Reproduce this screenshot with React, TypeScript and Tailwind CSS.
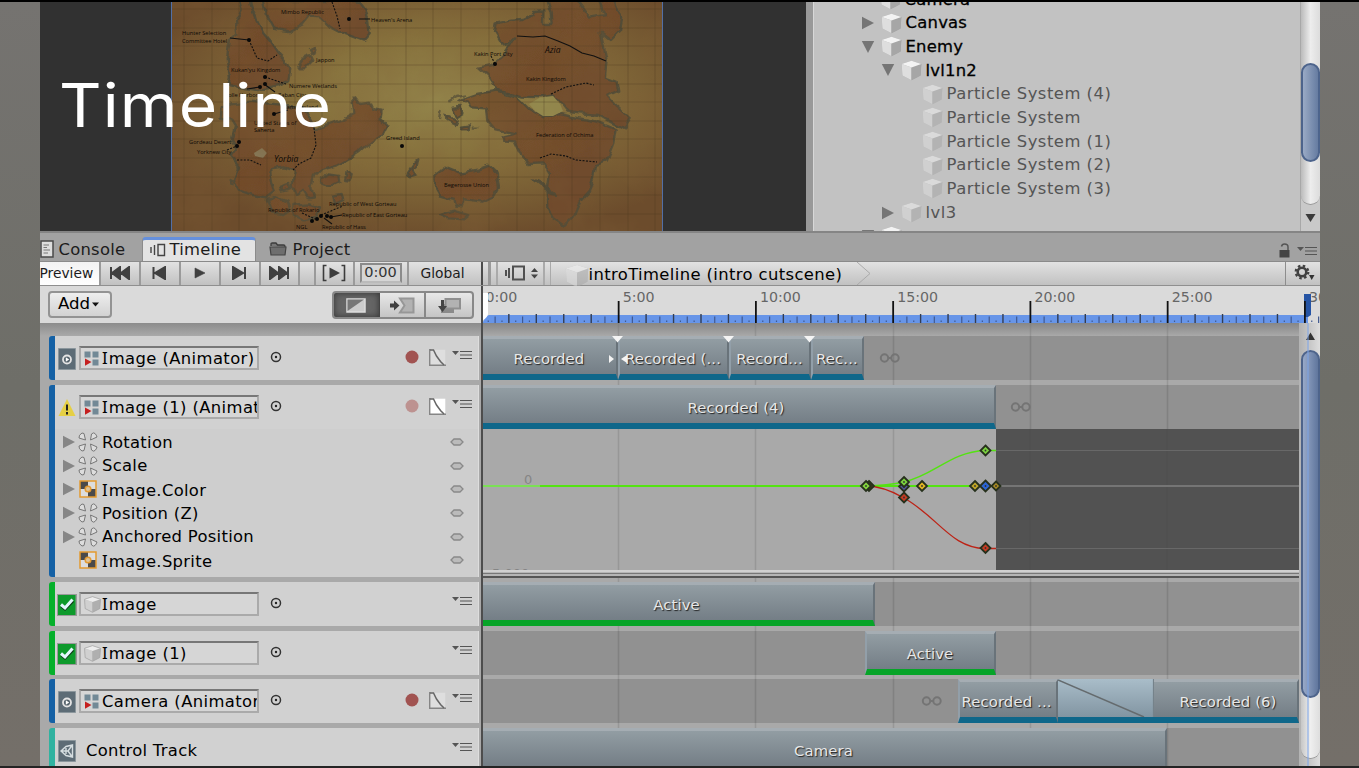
import React from "react";

const UI = "font-['DejaVu_Sans',sans-serif]";

/* Text whose capital I carries serifs. */
function T({ children }: { children: string }) {
  const parts = children.split("I");
  return (
    <>
      {parts.map((p, i) => (
        <React.Fragment key={i}>
          {i > 0 && <span className="font-['Noto_Sans',sans-serif] text-[1.02em] tracking-[0.06em]">I</span>}
          {p}
        </React.Fragment>
      ))}
    </>
  );
}

function Cube({ dim = false, soft = false, size = 21 }: { dim?: boolean; soft?: boolean; size?: number }) {
  return (
    <svg width={size} height={size} viewBox="0 0 21 21" className={dim ? "shrink-0 opacity-50" : soft ? "shrink-0 opacity-80" : "shrink-0"}>
      <path d="M10.5 .8 20.3 4 19.6 15.5 10.5 20.2 1.4 15.5.7 4Z" fill="#a4a4a4" />
      <path d="M.7 4 10.5 7.4V20.2L1.4 15.5Z" fill={soft ? "#cfcfcf" : "#dedede"} />
      <path d="M20.3 4 10.5 7.4V20.2l9.1-4.7Z" fill="#a6a6a6" />
      <path d="M10.5.8 20.3 4 10.5 7.4.7 4Z" fill="#f3f3f3" />
      {soft && <path d="M10.5 .8 20.3 4 19.6 15.5 10.5 20.2 1.4 15.5.7 4Z" fill="none" stroke="#999" strokeWidth=".9" />}
    </svg>
  );
}

function Fold({ open = false }: { open?: boolean }) {
  return (
    <svg width="14" height="14" viewBox="0 0 14 14" className="shrink-0">
      <path d={open ? "M.8 1H13.2L7 13Z" : "M1 .8V13.2L13 7Z"} fill="#757575" />
    </svg>
  );
}

function MapPicture() {
  const label = "font-['Open_Sans',sans-serif]";
  return (
    <svg width="490" height="229" viewBox="172 2 490 229" className="block shrink-0">
      <defs>
        <radialGradient id="sea" cx=".54" cy=".42" r=".62">
          <stop offset="0" stopColor="#94874c" />
          <stop offset=".45" stopColor="#86703c" />
          <stop offset="1" stopColor="#6c4c2c" />
        </radialGradient>
        <linearGradient id="land" x1="0" y1="0" x2="1" y2="1">
          <stop offset="0" stopColor="#74532d" />
          <stop offset=".5" stopColor="#71492a" />
          <stop offset="1" stopColor="#6d4a2d" />
        </linearGradient>
        <filter id="rough" x="-5%" y="-5%" width="110%" height="110%">
          <feTurbulence type="fractalNoise" baseFrequency=".06" numOctaves="3" seed="4" />
          <feDisplacementMap in="SourceGraphic" scale="8" xChannelSelector="R" yChannelSelector="G" />
        </filter>
        <filter id="grain">
          <feTurbulence type="fractalNoise" baseFrequency=".018" numOctaves="4" seed="9" />
          <feColorMatrix values="0 0 0 0 .22  0 0 0 0 .12  0 0 0 0 .04  1.3 0 0 0 -.45" />
        </filter>
      </defs>
      <rect x="172" y="2" width="490" height="229" fill="url(#sea)" />
      <g fill="url(#land)" fillOpacity=".93" stroke="#4b4a38" strokeWidth="7" strokeOpacity=".85" strokeLinejoin="round" filter="url(#rough)">
        <g transform="scale(.33333)">
          <path d="M790 0 800 45 825 90 870 97 910 75 930 50 960 52 990 80 1025 98 1090 122 1109 100 1104 60 1090 25 1070 0Z" />
          <path d="M715 0 725 30 708 65 712 103 690 120 680 180 690 230 685 255 720 263 765 270 800 265 840 258 862 240 868 205 855 180 835 160 815 130 790 100 770 60 755 20 752 0Z" />
          <path d="M665 325 695 310 750 305 800 310 860 315 900 325 930 360 945 388 990 372 1030 358 1060 342 1055 305 1066 292 1080 312 1110 308 1120 330 1145 335 1142 355 1162 377 1150 402 1115 425 1080 455 1045 478 1010 497 965 510 945 530 937 560 945 592 925 595 910 570 885 588 875 560 877 535 882 512 850 502 820 507 808 520 813 550 822 575 800 592 760 585 722 572 705 540 717 500 690 470 712 440 697 410 705 380 690 355 662 350Z" />
          <path d="M895 205 920 170 935 168 940 180 915 205ZM960 535 985 520 1015 525 1018 545 985 560 960 548ZM1040 515 1055 522 1050 542 1035 540ZM840 560 865 552 870 565 845 572ZM690 540 702 545 700 555 688 552ZM930 150 940 145 948 152 935 160Z" />
          <path d="M800 600 830 592 860 605 870 630 850 645 815 640ZM880 615 925 610 960 622 950 650 910 658 885 648ZM1000 590 1025 585 1030 600 1005 612ZM1220 520 1240 490 1255 475 1250 500 1235 512 1248 530 1230 535Z" />
        </g>
        <g transform="translate(400) scale(.33333)">
          <path d="M405 30 433 28 432 75 455 75 452 40 440 0 535 0 570 50 615 42 600 0 645 0 667 50 660 90 630 120 602 98 612 140 620 182 615 232 650 245 655 275 622 290 645 315 690 355 670 385 630 365 595 345 540 340 500 335 480 310 460 285 420 292 370 290 320 275 290 270 265 230 235 203 275 195 310 168 335 130 345 112 320 138 300 120 285 95 290 70 330 62 370 60 400 45Z" />
          <path d="M178 300 230 282 290 272 350 290 390 330 430 352 480 342 540 355 590 365 647 388 640 430 618 485 588 495 582 540 570 572 542 602 522 650 495 677 462 655 442 620 440 570 447 520 427 490 385 492 360 462 345 430 310 428 308 410 347 400 285 388 262 360 258 328 215 325 205 308Z" />
          <path d="M106 522 135 500 180 518 235 508 265 497 290 520 297 560 280 590 250 605 192 598 185 622 165 620 160 600 122 590 108 565ZM158 320 185 318 190 338 170 350ZM140 345 170 360 165 372 142 360ZM180 380 205 376 203 388 184 388ZM120 645 160 632 205 645 190 658 145 655ZM398 538 425 552 465 585 450 580Z" />
          <path d="M145 305 170 288 195 283M120 360 125 330M215 380 235 380" fill="none" strokeOpacity=".7" />
        </g>
      </g>
      <path d="M529 104 540 97.500 553 96 560 104 563 111 553 116 543 116 535 111Z" fill="#948a4e" />
      <path d="m254 153 8-5 5 5-4 5-8-2Z" fill="#857756" />
      <g stroke="#4c351f" strokeOpacity=".42" strokeWidth=".8">
        {[184, 212, 239, 267, 295, 322, 350, 378, 406, 433, 461, 489, 517, 544, 572, 600, 628, 655].map((x) => (
          <path key={x} d={`M${x} 2V231`} />
        ))}
        {[9, 28, 46, 65, 84, 102, 121, 139, 158, 177, 195, 214].map((y) => (
          <path key={y} d={`M172 ${y}H662`} />
        ))}
      </g>
      <rect x="172" y="2" width="490" height="229" filter="url(#grain)" opacity=".45" />
      <g fill="none" stroke="#111" strokeWidth="1.1" strokeDasharray="2 1.4">
        <path d="M249 40 257 58 268 61 277 55M332 2 337 16 340 29M314 128 316 145 311 158 299 164 293 170M237 160H250L261 165M540 158 551 154 566 156 576 160 597 162M551 94 566 87 586 83 594 85" />
        <path d="M265 77 286 84M227 150 237 146M491 56 495 64M302 213 315 219M321 215 343 206" />
      </g>
      <path d="M517 36 533 37 545 36 558 41 570 46 582 53 594 56 606 61M359 19H370M230 38 249 40M247 89 260 87M264 84 275 92M274 114 288 110M331 217 342 215M324 218 332 224" fill="none" stroke="#111" strokeWidth="1.1" />
      <g fill="#080808">
        {[[349, 19], [249, 40], [265, 77], [265, 84], [260, 87], [274, 114], [239, 142], [237, 146], [402, 146], [495, 64], [321, 216], [327, 216], [331, 217], [317, 219], [312, 221]].map(([x, y]) => (
          <circle key={`${x}-${y}`} cx={x} cy={y} r="2" />
        ))}
      </g>
      <g fill="#0d0906" fontSize="5.7" className={label}>
        <text x="281" y="13.500">Mimbo Republic</text>
        <text x="371" y="21.500">Heaven's Arena</text>
        <text x="182" y="35">Hunter Selection</text>
        <text x="182" y="42.500">Committee Hotel</text>
        <text x="316" y="61.500">Jappon</text>
        <text x="231" y="71.500">Kukan'yu Kingdom</text>
        <text x="289" y="88">Numere Wetlands</text>
        <text x="224" y="97">Dolle Harbor</text>
        <text x="278" y="97">Zaban City</text>
        <text x="281" y="109">Glam Gasland</text>
        <text x="254" y="124.500">United States of</text>
        <text x="254" y="132">Saherta</text>
        <text x="189" y="143.500">Gordeau Desert</text>
        <text x="197" y="154">Yorknew City</text>
        <text x="386" y="140">Greed Island</text>
        <text x="329" y="205.500">Republic of West Gorteau</text>
        <text x="268" y="212">Republic of Rokario</text>
        <text x="342" y="216.500">Republic of East Gorteau</text>
        <text x="296" y="228.500">NGL</text>
        <text x="322" y="228.500">Republic of Hass</text>
        <text x="474" y="55.500">Kakin Port City</text>
        <text x="526" y="81">Kakin Kingdom</text>
        <text x="536" y="137">Federation of Ochima</text>
        <text x="444" y="187">Begerosse Union</text>
        <text x="274" y="162" fontSize="8.500" fontStyle="italic">Yorbia</text>
        <text x="545" y="53" fontSize="8.500" fontStyle="italic">Azia</text>
      </g>
    </svg>
  );
}

const TREE = [
  { name: "Camera", indent: "pl-[67px]", fold: null, dim: false },
  { name: "Canvas", indent: "pl-[48px]", fold: "closed", dim: false },
  { name: "Enemy", indent: "pl-[48px]", fold: "open", dim: false },
  { name: "lvl1n2", indent: "pl-[68px]", fold: "open", dim: false },
  { name: "Particle System (4)", indent: "pl-[109px]", fold: null, dim: true },
  { name: "Particle System", indent: "pl-[109px]", fold: null, dim: true },
  { name: "Particle System (1)", indent: "pl-[109px]", fold: null, dim: true },
  { name: "Particle System (2)", indent: "pl-[109px]", fold: null, dim: true },
  { name: "Particle System (3)", indent: "pl-[109px]", fold: null, dim: true },
  { name: "lvl3", indent: "pl-[68px]", fold: "closed", dim: true },
  { name: "", indent: "pl-[48px]", fold: "open", dim: false },
];

function Hierarchy() {
  return (
    <div className="flex h-[229px] w-[514px] shrink-0 border-l-[7px] border-[#999] bg-[#c2c2c2] shadow-[inset_1px_0_#d8d8d8]">
      <div className="flex-1 overflow-hidden">
        <div className="-mt-[14.500px]">
          {TREE.map((r, i) => (
            <div
              key={i}
              className={`flex h-[23.7px] items-center ${r.indent} text-[16.4px] leading-none whitespace-nowrap ${r.dim ? "tracking-[0.500px] text-[#555]" : "tracking-[0.250px] text-black [-webkit-text-stroke:0.3px_#000]"}`}
            >
              {r.fold && (
                <span className="mr-[6px] flex">
                  <Fold open={r.fold === "open"} />
                </span>
              )}
              <Cube dim={r.dim} />
              <span className="ml-[4px] pt-px">{r.name}</span>
            </div>
          ))}
        </div>
      </div>
      <div className="flex w-[20px] flex-col border-l border-[#a8a8a8] bg-[#c9c9c9]">
        <div className="h-[203px] rounded-b-[10px] border-b border-[#999] bg-linear-to-r from-[#bbb] via-[#ededed] to-[#dcdcdc] pt-[61px]">
          <div className="h-[99px] rounded-[10px] border-2 border-[#4d648c] bg-linear-to-r from-[#9aaac5] to-[#667ca1]" />
        </div>
        <svg width="19" height="26" viewBox="0 0 19 26">
          <path d="M4.500 9H14.500L9.500 17Z" fill="#3b3b3b" />
        </svg>
      </div>
    </div>
  );
}

function MenuLines() {
  return (
    <svg width="21" height="10" viewBox="0 0 21 10" className="shrink-0">
      <path d="M0 1H7L3.500 5Z" fill="#555" />
      <path d="M8 1.500H20M8 5H20M8 8.500H20" stroke="#555" strokeWidth="1.200" />
    </svg>
  );
}

function TabBar() {
  return (
    <div className="flex h-[30px] items-end border-t-2 border-[#858585] bg-[#a2a2a2] text-[16.4px] leading-none tracking-[0.250px] text-[#1c1c1c]">
      <div className="flex h-[24px] w-[102px] items-center">
        <svg width="14" height="18" viewBox="0 0 14 18" className="shrink-0">
          <path d="M1 1H13V17H1Z" fill="#ddd" stroke="#4a4a4a" strokeWidth="1.500" />
          <path d="M3.500 5H9M3.500 7.500H7M3.500 10H10M3.500 13H8" stroke="#777" />
        </svg>
        <span className="ml-[5px] pt-[2px]">Console</span>
      </div>
      <div className="flex h-[24px] w-[114px] items-center rounded-t-[4px] border-x border-t-[3px] border-x-[#8b8b8b] border-t-[#6590dd] bg-[#e3e3e3] pl-[7px]">
        <svg width="16" height="14" viewBox="0 0 16 14" className="-mt-px shrink-0">
          <path d="M1 4V10M4.500 2V12M8 1.500H14.500V12.500H8Z" fill="none" stroke="#444" strokeWidth="1.400" />
        </svg>
        <span className="ml-[4px]">Timeline</span>
      </div>
      <div className="flex h-[24px] flex-1 items-center pl-[13px]">
        <svg width="18" height="14" viewBox="0 0 18 14" className="shrink-0">
          <path d="M2 4V2.200Q2 1 3.200 1H7L8.500 3H14.500Q16 3 16 4.200V5" fill="#777" stroke="#3c3c3c" strokeWidth="1.300" />
          <path d="M1 5H17L16 13H2Z" fill="#6e6e6e" stroke="#444" strokeWidth="1.200" />
        </svg>
        <span className="ml-[6px] pt-[2px]">Project</span>
      </div>
      <div className="flex h-[21px] items-center gap-[7px] pr-[2px]">
        <svg width="11" height="15" viewBox="0 0 11 15">
          <path d="M.5 7H10.500V14.500H.5Z" fill="#444" />
          <path d="M2.500 3.500Q3 1 5.500 1 9 1 9 4V7" fill="none" stroke="#555" strokeWidth="1.500" />
        </svg>
        <MenuLines />
      </div>
    </div>
  );
}

const ICON_PATHS = [
  "M2 1V13M11 1 3 7l8 6ZM20 1l-8 6 8 6Z",
  "M4.500 1V13M16 1 6 7l10 6Z",
  "M6 2 16 7 6 12Z",
  "M16 1V13M4 1 14 7 4 13Z",
  "M20 1V13M2 1l8 6-8 6ZM11 1l8 6-8 6Z",
];

function Toolbar() {
  const btn = "flex h-full items-center justify-center border-r-2 border-[#9a9a9a] pb-px";
  return (
    <div className="flex h-[25px] border-b border-t border-b-[#8f8f8f] border-t-[#8a8a8a] bg-linear-to-b from-[#e2e2e2] to-[#c1c1c1] text-[#1c1c1c]">
      <div className="flex w-[441px] shrink-0 text-[13.800px]">
        <div className="flex w-[61px] items-center overflow-hidden border-r-2 border-[#9a9a9a] bg-linear-to-b from-[#f2f2f2] to-white pb-px whitespace-nowrap">
          Preview
        </div>
        {ICON_PATHS.map((d, i) => (
          <div key={i} className={`${btn} ${i === 4 ? "w-[39px]" : "w-[40px]"}`}>
            <svg width="22" height="14" viewBox="0 0 22 14">
              <path d={d} fill="#404040" stroke="#404040" strokeWidth={i === 2 ? 0.6 : 2} />
            </svg>
          </div>
        ))}
        <div className={`${btn} w-[16px]`} />
        <div className={`${btn} w-[39px]`}>
          <svg width="26" height="18" viewBox="0 0 26 18">
            <path d="M5.500 1.500H2.500V16.500H5.500M20.500 1.500H23.500V16.500H20.500" fill="none" stroke="#3c3c3c" strokeWidth="1.600" />
            <path d="M8.500 3.500 19 9 8.500 14.500Z" fill="#3c3c3c" />
          </svg>
        </div>
        <div className={`${btn} w-[54px]`}>
          <div className="flex h-[20px] w-[42px] items-center justify-center border-2 border-[#8b8b8b] border-b-[#bbb] bg-[#d6d6d6] text-[14.500px] text-[#333]">
            0:00
          </div>
        </div>
        <div className="flex flex-1 items-center justify-center pr-[4px] pb-px">Global</div>
      </div>
      <div className="w-[2px] shrink-0 bg-[#4d4d4d]" />
      <div className="flex flex-1 items-center">
        <div className="ml-[5px] h-full w-[3px] bg-[#9a9a9a]" />
        <div className="ml-[5px] flex h-full w-[49px] items-center border-x-2 border-[#aaa] pl-[7px]">
          <svg width="35" height="16" viewBox="0 0 35 16" className="-mt-px">
            <path d="M1 5V11M4 3V13M8 1.500H19V14.500H8Z" fill="none" stroke="#505050" strokeWidth="2" />
            <path d="M26 7 29.500 3 33 7ZM26 9.500 29.500 13.500 33 9.500Z" fill="#444" />
          </svg>
        </div>
        <div className="ml-[5px] h-full w-px bg-[#aaa]" />
        <div className="ml-[14px] flex items-center pt-[4px] text-[16.400px] leading-none tracking-[0.380px] text-black">
          <Cube size={24} dim />
          <span>introTimeline (intro cutscene)</span>
        </div>
        <svg width="16" height="23" viewBox="0 0 16 23" className="ml-[14px] self-stretch">
          <path d="M1 0 14 11.500 1 23" fill="none" stroke="#aaa" />
        </svg>
        <div className="ml-auto flex h-full w-[35px] items-center border-l border-[#8d8d8d] pb-[2px] pl-[8px]">
          <svg width="22" height="18" viewBox="0 0 22 18">
            <circle cx="8" cy="8" r="4.300" fill="none" stroke="#414141" strokeWidth="2.600" />
            <circle cx="8" cy="8" r="6.300" fill="none" stroke="#414141" strokeWidth="2.200" strokeDasharray="2.500 2.450" />
            <path d="M15 11H20.500L17.700 16Z" fill="#333" />
          </svg>
        </div>
      </div>
    </div>
  );
}

const seg = "flex h-full w-[47px] items-center justify-center";

function Header() {
  return (
    <div className="flex h-[37px] w-[441px] shrink-0 items-start bg-[#dadada] pl-[8px]">
      <div className="mt-[5px] flex h-[27px] w-[64px] items-center justify-center gap-[2px] rounded-[4px] border-2 border-[#939393] bg-linear-to-b from-[#eee] to-[#d2d2d2] pr-[2px] text-[16.600px] leading-none text-black">
        Add
        <svg width="7" height="5" viewBox="0 0 7 5">
          <path d="M0 .5H7L3.500 4.500Z" fill="#111" />
        </svg>
      </div>
      <div className="mt-[5px] ml-[220px] flex h-[28px] w-[142px] overflow-hidden rounded-[4px] border-2 border-[#888] bg-linear-to-b from-[#e8e8e8] to-[#c5c5c5]">
        <div className={`${seg} border-r border-[#444] bg-[#656565] shadow-[inset_0_0_6px_#333]`}>
          <svg width="20" height="15" viewBox="0 0 20 15">
            <path d="M1 1H19V14H1Z" fill="#ccc" stroke="#ddd" strokeWidth="1.500" />
            <path d="M1.500 1.500H18L1.500 13Z" fill="#777" />
          </svg>
        </div>
        <div className={`${seg} border-r-2 border-[#888]`}>
          <svg width="26" height="17" viewBox="0 0 26 17">
            <path d="M11 1.500H24.500V15.500H11L15.500 8.500Z" fill="#b2b2b2" stroke="#979797" strokeWidth="2" />
            <path d="M1 6.500H5V3.500L10.500 8.500 5 13.500V10.500H1Z" fill="#3f3f3f" />
          </svg>
        </div>
        <div className={seg}>
          <svg width="26" height="17" viewBox="0 0 26 17">
            <path d="M5 7H18V16H5Z" fill="#8a8a8a" />
            <path d="M9.500 2H24V11.500H9.500Z" fill="#b2b2b2" stroke="#8f8f8f" strokeWidth="2" />
            <path d="M5 3H8V9H11L6.500 15 2 9H5Z" fill="#444" />
          </svg>
        </div>
      </div>
    </div>
  );
}

function Ruler() {
  const ticks = [];
  for (let i = 1; i <= 122; i++) {
    const x = i * 6.8625 - 1.6;
    if (i % 20 === 0) ticks.push(<path key={i} d={`M${x} 15V37`} stroke="#111" strokeWidth="1.800" />);
    else if (i % 4 === 0) ticks.push(<path key={i} d={`M${x} 28V37`} stroke="#333c50" strokeWidth="1.400" />);
    else if (i % 2 === 0) ticks.push(<path key={i} d={`M${x} 30.500V37`} stroke="#40598f" strokeWidth="1.200" />);
    else ticks.push(<path key={i} d={`M${x} 34.500V36`} stroke="#40598f" strokeWidth="1.200" />);
  }
  return (
    <div className="relative h-[37px] flex-1 overflow-hidden bg-[#dadada] text-[14.200px] leading-none text-[#666]">
      <div className="flex pt-[4px] pl-[3px]">
        {["0:00", "5:00", "10:00", "15:00", "20:00", "25:00", "30:00"].map((l) => (
          <span key={l} className="w-[137.250px] shrink-0 whitespace-nowrap">
            {l}
          </span>
        ))}
      </div>
      <svg width="837" height="37" viewBox="0 0 837 37" className="absolute top-0 left-0">
        <path d="M0 36Q2 30 6 29H825V37H0Z" fill="#6795e8" />
        <path d="M0 7H5V28Q4 32 0 34Z" fill="#fff" />
        <path d="M821 8H828V29L825 31H821Z" fill="#2554a4" />
        {ticks}
      </svg>
    </div>
  );
}

function AnimatorIcon() {
  return (
    <svg width="15" height="15" viewBox="0 0 15 15" className="shrink-0">
      <path d="M.5.500H6.500V6.500H.5ZM8.500.500H14.500V6.500H8.500ZM8.500 8.500H14.500V14.500H8.500Z" fill="#728996" />
      <path d="M1 7.500 7.500 11 1 14.800Z" fill="#c51f1f" />
    </svg>
  );
}

function TrackBadge({ kind }: { kind: "anim" | "warn" | "check" | "control" }) {
  if (kind === "warn")
    return (
      <svg width="18" height="20" viewBox="0 0 18 20">
        <path d="M9 1 17.500 18H.5Z" fill="#e5cf45" />
        <path d="M9 6.500V12.500M9 14V16.500" stroke="#222" strokeWidth="2" />
      </svg>
    );
  if (kind === "check")
    return (
      <svg width="20" height="22" viewBox="0 0 20 22">
        <path d="M0 0H20V22H0Z" fill="#999" />
        <path d="M1 1H18.500V21H1Z" fill="#0e9a2c" />
        <path d="M4.500 12 8 15 16 7" fill="none" stroke="#123c1c" strokeWidth="3" />
        <path d="M4 10.500 8 14 15.500 5.500" fill="none" stroke="#e4f7ff" strokeWidth="3" />
      </svg>
    );
  return (
    <svg width="18" height="22" viewBox="0 0 18 22">
      <path d="M.5.500H17.500V21.500H.5Z" fill="#5d6c76" stroke="#8b969c" />
      {kind === "anim" ? (
        <>
          <circle cx="9" cy="11.500" r="4" fill="#56646d" stroke="#e4e4e4" strokeWidth="1.800" />
          <path d="M7.800 9.300 11.200 11.500 7.800 13.700Z" fill="#fff" />
        </>
      ) : (
        <path d="M3 11 8 6.500 14.500 5V17L8 15.500ZM3 11H10L14 5.500M10 11 14 16.500M8 8V14" fill="none" stroke="#d5dde0" strokeWidth="1.400" />
      )}
    </svg>
  );
}

function Target() {
  return (
    <svg width="12" height="12" viewBox="0 0 12 12" className="mb-[2px] ml-[11px] shrink-0">
      <circle cx="6" cy="6" r="4.500" fill="none" stroke="#333" strokeWidth="1.500" />
      <circle cx="6" cy="6" r="1.200" fill="#222" />
    </svg>
  );
}

type Track = { badge: "anim" | "warn" | "check" | "control"; name: string; field: boolean; rec: "on" | "dim" | null };

function TrackHead({ badge, name, field, rec }: Track) {
  return (
    <div className="flex h-[44px] items-center pl-[2px] tracking-[0.400px]">
      <span className="flex w-[20px] shrink-0 justify-center pt-[2px]">
        <TrackBadge kind={badge} />
      </span>
      {field ? (
        <div className="ml-[2px] flex h-[24px] w-[180px] shrink-0 items-center overflow-hidden border-2 border-[#aaa] border-t-[#777] bg-[#d6d6d6] pl-[3px] whitespace-nowrap">
          {badge === "check" ? <Cube size={17} soft /> : <AnimatorIcon />}
          <span className={`pt-[2px] text-[16.400px] leading-none text-black ${badge === "check" ? "ml-[1px]" : "ml-[3px]"}`}>
            <T>{name}</T>
          </span>
        </div>
      ) : (
        <span className="ml-[9px] pt-[3px] text-[16.400px] leading-none tracking-[0.300px] text-black">{name}</span>
      )}
      {field && <Target />}
      <div className="mr-[5px] mb-[6px] ml-auto flex items-center">
        {rec && (
          <>
            <svg width="14" height="14" viewBox="0 0 14 14" className="mt-[3px]">
              <circle cx="7" cy="7" r="6.500" fill={rec === "on" ? "#a15351" : "#bd9290"} />
            </svg>
            <svg width="17" height="17" viewBox="0 0 17 17" className="mt-[5px] mr-[6px] ml-[10px]">
              <path d="M.7.700H16.300V16.300H.7Z" fill={rec === "dim" ? "#fff" : "#dedede"} />
              <path d="M.7 0V16.300H17" fill="none" stroke="#858585" strokeWidth="1.400" />
              <path d="M1 1H4.500L7.500 7 11.500 12.500 15 16" fill="none" stroke="#666" strokeWidth="1.500" />
            </svg>
          </>
        )}
        <MenuLines />
      </div>
    </div>
  );
}

function LeafIcon() {
  return (
    <svg width="20" height="20" viewBox="0 0 20 20" className="shrink-0">
      <path
        d="M7.500 8 1 6Q.5 3 4 1L6 1.500ZM12.500 8 13.500 2Q15.500 0 17 1.500T19 5ZM7.500 12 1 14Q.5 17 4 19L6 18.500ZM12.500 12 13.500 18Q15.500 20 17 18.500T19 15Z"
        fill="#ddd"
        stroke="#777"
      />
    </svg>
  );
}

function ImageIcon() {
  return (
    <svg width="18" height="18" viewBox="0 0 18 18" className="mx-px shrink-0">
      <path d="M1 1H17V17H1Z" fill="#ddd" />
      <path d="M1 1H9V9H1ZM9 9H17V17H9Z" fill="#4a4a4a" />
      <circle cx="9" cy="9" r="2.800" fill="#ddc49b" stroke="#e39a31" strokeWidth="1.500" />
      <path d="M1 1H17V17H1Z" fill="none" stroke="#e39a31" strokeWidth="1.500" />
    </svg>
  );
}

const PROPS = [
  { name: "Rotation", leaf: true, fold: true },
  { name: "Scale", leaf: true, fold: true },
  { name: "Image.Color", leaf: false, fold: true },
  { name: "Position (Z)", leaf: true, fold: true },
  { name: "Anchored Position", leaf: true, fold: true },
  { name: "Image.Sprite", leaf: false, fold: false },
];

const rowBox = "w-[430px] shrink-0 overflow-hidden rounded-l-[3px] border-r border-l-[6px] border-r-[#ddd] bg-[#d1d1d1]";

function TrackList() {
  return (
    <div className="flex h-[443px] w-[441px] shrink-0 flex-col overflow-hidden bg-[#a9a9a9] pl-[9.500px]">
      <div className="-ml-[9.500px] h-[13px] shrink-0 bg-linear-to-b from-[#8c8c8c] to-[#a9a9a9]" />
      <div className={`${rowBox} mb-[5px] h-[44px] border-l-[#1561a5]`}>
        <TrackHead badge="anim" name="Image (Animator)" field rec="on" />
      </div>
      <div className={`${rowBox} mb-[5px] h-[192px] border-l-[#1561a5]`}>
        <TrackHead badge="warn" name="Image (1) (Animator)" field rec="dim" />
        <div className="h-[148px] bg-[#cecece] pt-px">
          {PROPS.map((p) => (
            <div key={p.name} className="flex h-[23.700px] items-center pr-[14px] pl-[7px] text-[16.400px] leading-none tracking-[0.300px] text-black">
              <span className="flex w-[16px] opacity-80">{p.fold && <Fold />}</span>
              {p.leaf ? <LeafIcon /> : <ImageIcon />}
              <span className="ml-[4px] pt-[2px]">
                <T>{p.name}</T>
              </span>
              <svg width="14" height="8" viewBox="0 0 14 8" className="ml-auto">
                <path d="M1 4 4 1H10L13 4 10 7H4Z" fill="#bbb" stroke="#898989" strokeWidth="1.300" />
              </svg>
            </div>
          ))}
        </div>
      </div>
      <div className={`${rowBox} mb-[5px] h-[44px] border-l-[#05b02b]`}>
        <TrackHead badge="check" name="Image" field rec={null} />
      </div>
      <div className={`${rowBox} mb-[4px] h-[44px] border-l-[#05b02b]`}>
        <TrackHead badge="check" name="Image (1)" field rec={null} />
      </div>
      <div className={`${rowBox} mb-[5px] h-[44px] border-l-[#1561a5]`}>
        <TrackHead badge="anim" name="Camera (Animator)" field rec="on" />
      </div>
      <div className={`${rowBox} h-[44px] border-l-[#30b2a0]`}>
        <TrackHead badge="control" name="Control Track" field={false} rec={null} />
      </div>
    </div>
  );
}

function Clip({ w, label, tone = "blue", className = "" }: { w: string; label: string; tone?: "blue" | "green"; className?: string }) {
  return (
    <div
      className={`flex h-[44px] shrink-0 items-center justify-center overflow-hidden border-t-[3px] border-r-2 border-b-[6px] border-t-[#a5adb3] border-r-[#69737a] bg-linear-to-b from-[#929da3] to-[#747e86] pt-[6px] text-[14.800px] leading-none tracking-[0.150px] whitespace-nowrap text-[#e8e8e8] [text-shadow:1px_1px_1px_#222] ${w} ${tone === "green" ? "border-b-[#07a428]" : "border-b-[#0f678a]"} ${className}`}
    >
      {label}
    </div>
  );
}

function Endless({ className }: { className: string }) {
  return (
    <svg width="22" height="12" viewBox="0 0 22 12" className={`shrink-0 ${className}`}>
      <circle cx="5.500" cy="6" r="3.700" fill="none" stroke="#747474" strokeWidth="2" />
      <circle cx="16" cy="6" r="3.700" fill="none" stroke="#747474" strokeWidth="2" />
      <path d="M9 6H13" stroke="#747474" strokeWidth="2" />
    </svg>
  );
}

function Key({ x, y, fill, s = 5 }: { x: number; y: number; fill: string; s?: number }) {
  return (
    <g>
      <path d={`M${x} ${y - s}L${x + s} ${y}L${x} ${y + s}L${x - s} ${y}Z`} fill={fill} stroke="#26301c" strokeWidth="1.800" />
      <circle cx={x} cy={y} r=".9" fill="#333" />
    </g>
  );
}

function Curves() {
  return (
    <svg width="816" height="141" viewBox="483 429 816 141" className="block">
      <path d="M996 429H1299V570H996Z" fill="#525252" />
      <path d="M1030 429V570M1167 429V570" stroke="#4e4e4e" />
      <path d="M996 450.500H1299M996 548.500H1299" stroke="#686868" />
      <path d="M996 486H1299" stroke="#828282" strokeWidth="1.500" />
      <path d="M483 486H996" stroke="#54e312" strokeWidth="1.800" />
      <path d="M483 486H540" stroke="#7be055" strokeWidth="1.800" />
      <path d="M866 486Q888 485.500 904 482C935 475 950 452 985 450.500H996" fill="none" stroke="#54e312" strokeWidth="1.500" />
      <path d="M866 486C880 486 892 491 904 498C938 517 951 548 985 548.500H996" fill="none" stroke="#bd2316" strokeWidth="1.300" />
      <Key x={869} y={486} fill="#554b12" />
      <Key x={866} y={486} fill="#83d43e" />
      <Key x={904} y={486.500} fill="#52579d" />
      <Key x={904} y={482} fill="#7bd23f" />
      <Key x={904} y={497.500} fill="#c43b22" />
      <Key x={922} y={486} fill="#e1b424" />
      <Key x={975} y={486} fill="#bea427" />
      <Key x={985.500} y={486} fill="#2c65d4" s={5.500} />
      <Key x={996} y={486} fill="#a98c24" s={4.500} />
      <Key x={985.500} y={450.500} fill="#7bd23f" />
      <Key x={985.500} y={548} fill="#c43b22" />
      <g fill="#858585" fontSize="13" className={UI}>
        <text x="524" y="484">0</text>
        <text x="492" y="578">5.000</text>
      </g>
    </svg>
  );
}

const lane = "flex h-[44px] w-[816px] shrink-0 items-center bg-black/14";

function Marker({ className }: { className: string }) {
  return (
    <svg width="11" height="7" viewBox="0 0 11 7" className={`absolute top-0 ${className}`}>
      <path d="M0 0H11L5.500 6.500Z" fill="#f4f4f4" />
    </svg>
  );
}

function Lanes() {
  return (
    <div className="relative flex h-[443px] w-[818px] shrink-0 flex-col overflow-hidden border-r-2 border-[#b4b4b4] bg-[#a9a9a9]">
      <svg width="816" height="443" viewBox="0 0 816 443" className="absolute top-0 left-0">
        {[135.5, 272.5, 410.5, 547.5, 684.5].map((x) => (
          <path key={x} d={`M${x} 0V443`} stroke="#979797" strokeWidth="1.500" />
        ))}
      </svg>
      <div className="relative flex flex-col">
        <div className="h-[13px] bg-linear-to-b from-[#777]/70 to-transparent" />
        <div className={`${lane} relative mb-[5px]`}>
          <Clip w="w-[135px]" label="Recorded" className="[text-shadow:1px_1px_1px_#111,0_0_1px_#ddd]" />
          <Clip w="w-[111px]" label="Recorded (..." className="border-l-2 border-l-[#929fa9]" />
          <Clip w="w-[82px]" label="Record..." className="border-l-2 border-l-[#929fa9]" />
          <Clip w="w-[53px]" label="Rec..." className="border-l-2 border-l-[#929fa9]" />
          <Endless className="ml-[15px]" />
          <Marker className="left-[129px]" />
          <Marker className="left-[240px]" />
          <Marker className="left-[321px]" />
          <svg width="20" height="10" viewBox="0 0 20 10" className="absolute top-[18px] left-[125px]">
            <path d="M1 1 6 5 1 9ZM19 1 13 5 19 9Z" fill="#f4f4f4" />
          </svg>
        </div>
        <div className={lane}>
          <Clip w="w-[513px]" label="Recorded (4)" className="pr-[4px]" />
          <Endless className="ml-[14px]" />
        </div>
        <Curves />
        <div className="mb-[4px] h-[8px] border-t-2 border-b-2 border-t-[#d0d0d0] border-b-[#555] bg-[#b5b5b5] pt-px">
          <div className="h-px bg-[#777]" />
        </div>
        <div className={`${lane} mb-[5px]`}>
          <Clip w="w-[392px]" label="Active" tone="green" className="pr-[2px]" />
        </div>
        <div className={`${lane} mb-[4px]`}>
          <Clip w="w-[131px]" label="Active" tone="green" className="ml-[382px] border-l-2 border-l-[#929fa9]" />
        </div>
        <div className={`${lane} mb-[5px]`}>
          <Endless className="ml-[438px]" />
          <Clip w="w-[100px]" label="Recorded ..." className="ml-[15px] border-l-2 border-l-[#929fa9] pr-[2px]" />
          <div className="h-[44px] w-[96px] border-b-[6px] border-b-[#0f678a] bg-linear-to-b from-[#a9bdc9] to-[#8295a2]">
            <svg width="96" height="38" viewBox="0 0 96 38" className="block">
              <path d="M0 1 86 38" stroke="#656b6e" strokeWidth="1.500" />
              <path d="M95.500 0V38" stroke="#75828a" strokeWidth="1.200" />
            </svg>
          </div>
          <Clip w="w-[145px]" label="Recorded (6)" className="border-r-0 pl-[6px]" />
        </div>
        <div className={lane}>
          <Clip w="w-[684px]" label="Camera" className="border-b-[#747e86]" />
        </div>
      </div>
    </div>
  );
}

function TrackScroll() {
  return (
    <div className="relative flex flex-1 flex-col bg-linear-to-r from-[#b5b5b5] to-[#ddd]">
      <svg width="19" height="27" viewBox="0 0 19 27" className="shrink-0">
        <path d="M5 17H14L9.500 9.500Z" fill="#333" />
      </svg>
      <div className="h-[408px] rounded-[10px] bg-linear-to-r from-[#c6c6c6] via-[#efefef] to-[#ddd] shadow-[0_1px_#999]">
        <div className="h-[348px] rounded-[10px] border-2 border-[#4e648b] bg-linear-to-r from-[#98a9c8] to-[#60769d]" />
      </div>
      <div className="absolute top-0 left-[6px] h-[443px] w-[2px] bg-[#7ca4e8]/50" />
    </div>
  );
}

export default function App() {
  return (
    <div className={`relative flex h-[768px] w-[1359px] flex-col overflow-hidden border-t-2 border-b-2 border-t-black border-b-[#242424] bg-linear-to-b from-[#757370] via-[#6e6e68] to-[#746f69] ${UI}`}>
      <div className="mx-[39.500px] flex h-[764px] w-[1280px] flex-col overflow-hidden bg-[#a9a9a9]">
        <div className="flex h-[229px] bg-[#313131]">
          <div className="flex w-[766px] shrink-0 pl-[131px]">
            <div className="border-x border-[#536fa5]">
              <MapPicture />
            </div>
          </div>
          <Hierarchy />
        </div>
        <TabBar />
        <Toolbar />
        <div className="flex">
          <Header />
          <div className="w-[2px] bg-[#4d4d4d]" />
          <Ruler />
        </div>
        <div className="flex">
          <TrackList />
          <div className="w-[2px] shrink-0 bg-[#4d4d4d]" />
          <Lanes />
          <TrackScroll />
        </div>
      </div>
      <h1 className="absolute top-[65px] left-[59px] origin-left scale-x-[1.1] font-['Inter',sans-serif] text-[60px] leading-[76px] tracking-[1px] text-white">
        Timeline
      </h1>
    </div>
  );
}
